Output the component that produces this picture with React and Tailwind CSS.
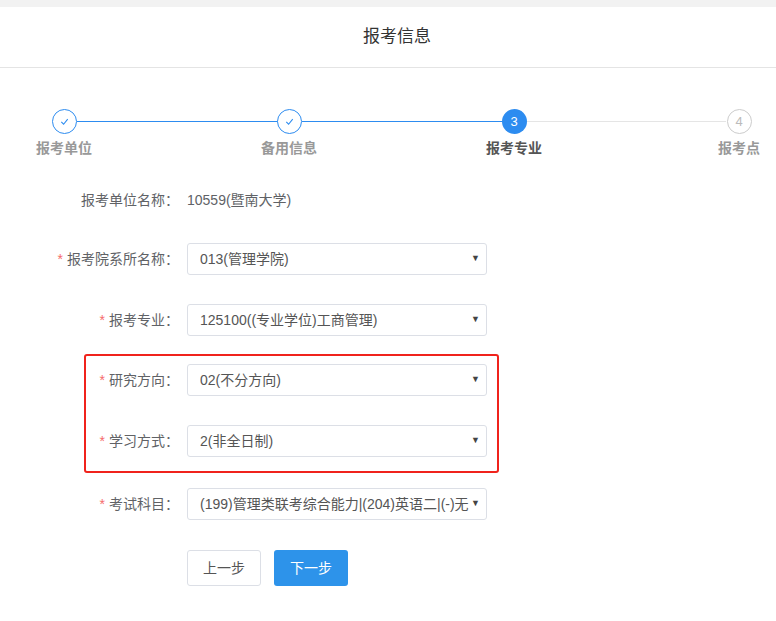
export default function App() {
  const steps = [
    { n: "1", label: "报考单位", s: "done" },
    { n: "2", label: "备用信息", s: "done" },
    { n: "3", label: "报考专业", s: "active" },
    { n: "4", label: "报考点", s: "todo" },
  ];
  const Row = ({ label, value, req, select = true }) => (
    <div className="flex items-center h-[32px]">
      <div className="w-[180px] text-right text-[14px] text-[#606266] pr-[1px]">
        {req && <span className="text-[#f56c6c] mr-[4px]">*</span>}
        {label}：
      </div>
      <div className="ml-[7px]">
        {select ? (
          <div className="w-[300px] h-[32px] border border-[#dcdfe6] rounded-[3px] flex items-center pl-[12px] pr-[6px] text-[14px] text-[#555]">
            <span className="flex-1 whitespace-nowrap overflow-hidden">{value}</span>
            <span className="text-[9px] text-[#444]">▼</span>
          </div>
        ) : (
          <span className="text-[14px] text-[#606266]">{value}</span>
        )}
      </div>
    </div>
  );
  return (
    <div className="w-[776px] h-[621px] bg-white overflow-hidden" style={{ fontFamily: '"Liberation Sans","Noto Sans CJK SC",sans-serif' }}>
      <div className="h-[7px] bg-[#f2f2f2]" />
      <div className="h-[61px] border-b border-[#e4e4e4] flex items-center justify-center pl-[18px] text-[17px] text-[#333]">报考信息</div>
      <div className="relative h-[101px]">
        <div className="absolute left-[77px] right-[475px] top-[53px] h-px bg-[#2d8cf0]" />
        <div className="absolute left-[302px] right-[250px] top-[53px] h-px bg-[#2d8cf0]" />
        <div className="absolute left-[527px] right-[50px] top-[53px] h-px bg-[#e5e5e5]" />
        {steps.map((st, i) => (
          <div key={i} className="absolute top-[41px] flex flex-col items-center w-[80px]" style={{ left: 64 + i * 225 - 40 }}>
            <div className={
              "w-[25px] h-[25px] rounded-full flex items-center justify-center text-[13px] bg-white " +
              (st.s === "done" ? "border border-[#2d8cf0] text-[#2d8cf0]" : st.s === "active" ? "text-white" : "border border-[#ccc] text-[#bbb]")
            } style={st.s === "active" ? { background: "#2d8cf0" } : {}}>
              {st.s === "done" ? (
                <svg width="11" height="11" viewBox="0 0 12 12" fill="none" stroke="#2d8cf0" strokeWidth="1.2"><path d="M2.5 6.5l2.5 2.5 4.5-5.5" /></svg>
              ) : st.n}
            </div>
            <div className={"mt-[4px] text-[14px] font-bold whitespace-nowrap " + (st.s === "active" ? "text-[#555]" : "text-[#999]")}>{st.label}</div>
          </div>
        ))}
      </div>
      <div className="flex flex-col">
        <div className="mt-[15px]"><Row label="报考单位名称" value="10559(暨南大学)" select={false} /></div>
        <div className="mt-[27px]"><Row req label="报考院系所名称" value="013(管理学院)" /></div>
        <div className="mt-[29px]"><Row req label="报考专业" value="125100((专业学位)工商管理)" /></div>
        <div className="mt-[18px] ml-[84px] w-[415px] h-[119px] border-2 border-[#f0231c] rounded-[3px] flex flex-col pt-[8px]">
          <div className="-ml-[86px]"><Row req label="研究方向" value="02(不分方向)" /></div>
          <div className="-ml-[86px] mt-[29px]"><Row req label="学习方式" value="2(非全日制)" /></div>
        </div>
        <div className="mt-[15px]"><Row req label="考试科目" value="(199)管理类联考综合能力|(204)英语二|(-)无" /></div>
        <div className="mt-[30px] ml-[187px] flex gap-[13px]">
          <button className="w-[74px] h-[36px] border border-[#dcdfe6] rounded-[3px] text-[14px] text-[#555] bg-white">上一步</button>
          <button className="w-[74px] h-[36px] rounded-[3px] text-[14px] text-white bg-[#2d93ea]">下一步</button>
        </div>
      </div>
    </div>
  );
}
